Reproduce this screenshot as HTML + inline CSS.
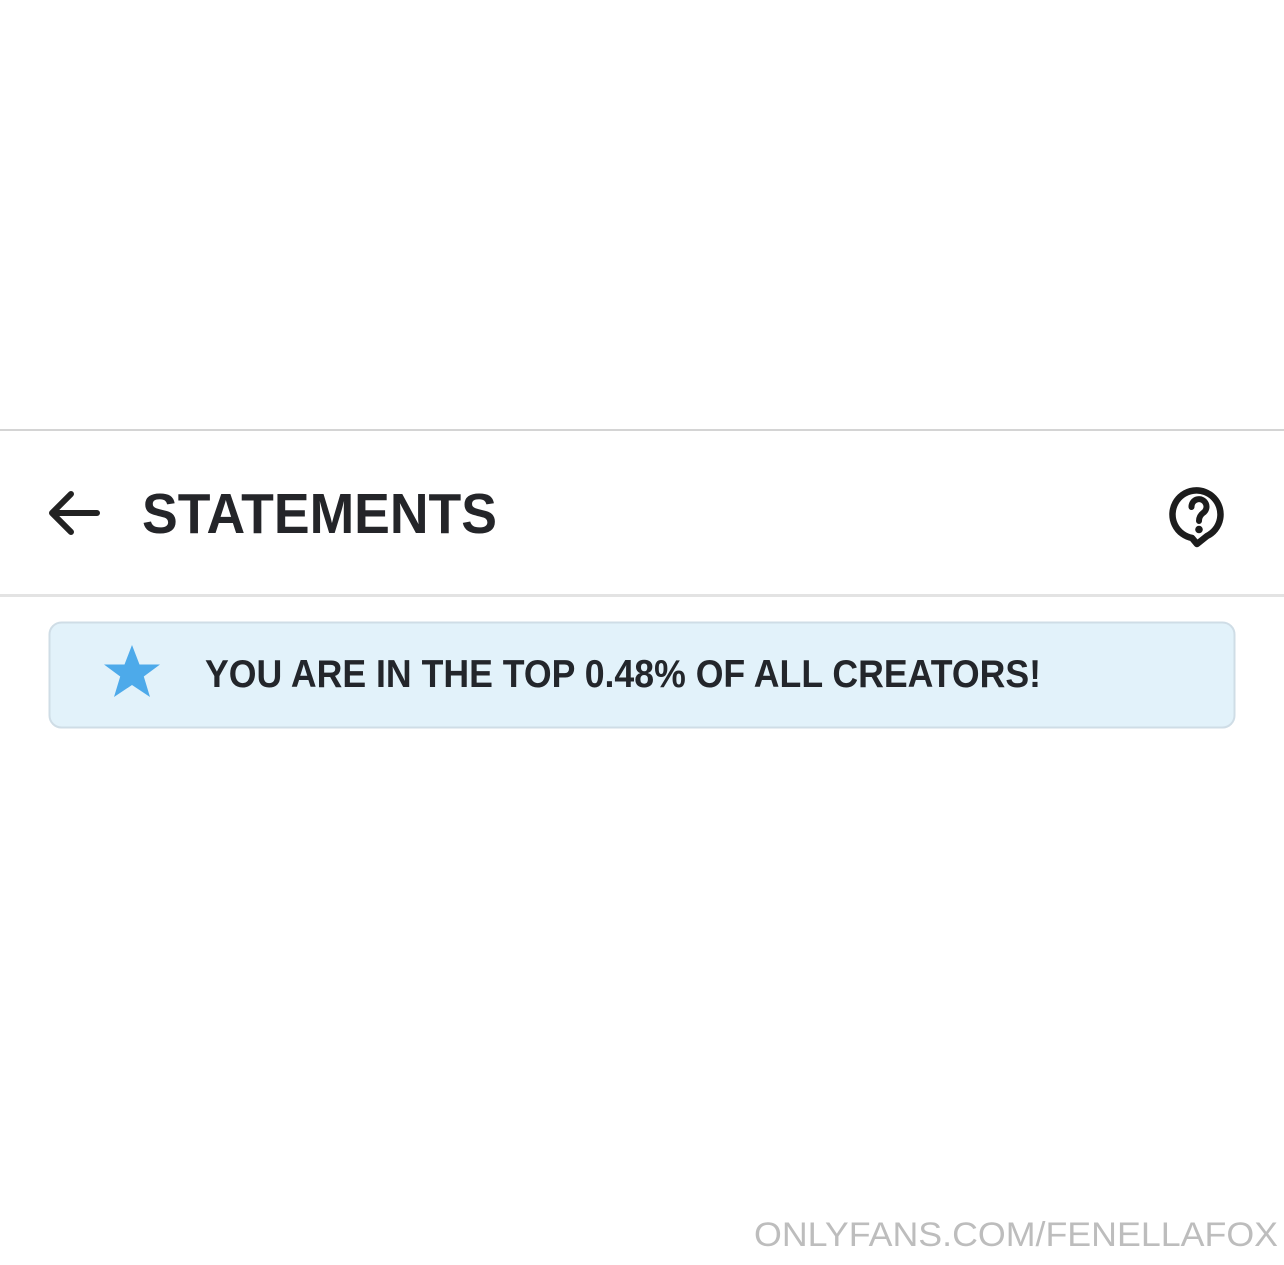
<!DOCTYPE html>
<html><head><meta charset="utf-8"><style>
html,body{margin:0;padding:0;background:#fff;width:1284px;height:1265px;overflow:hidden}
</style></head><body>
<svg width="1284" height="1265" viewBox="0 0 1284 1265" xmlns="http://www.w3.org/2000/svg" style="display:block">
<rect width="1284" height="1265" fill="#fff"/>
<rect x="0" y="429" width="1284" height="2" fill="#d4d4d4"/>
<rect x="0" y="594" width="1284" height="3" fill="#e3e3e3"/>
<path d="M97 513 H53 M71 494 L52 513 L71 532" fill="none" stroke="#222" stroke-width="6" stroke-linecap="round" stroke-linejoin="round"/>
<text x="142" y="533" font-family="Liberation Sans, sans-serif" font-weight="bold" font-size="57" fill="#242529" textLength="355" lengthAdjust="spacingAndGlyphs">STATEMENTS</text>
<path d="M1192 538 A24 24 0 1 1 1207 536 L1197 544 Z" fill="none" stroke="#1c1c1c" stroke-width="6.5" stroke-linejoin="round"/>
<path d="M1191.5 507 A7.5 7.5 0 1 1 1203 513 Q1199 516 1199 521" fill="none" stroke="#1c1c1c" stroke-width="6" stroke-linecap="round"/>
<circle cx="1199" cy="529.5" r="3.8" fill="#1c1c1c"/>
<rect x="49.5" y="622.5" width="1185" height="105" rx="12" fill="#e2f2fa" stroke="#cfdde6" stroke-width="2"/>
<polygon points="132,645 139.5,664.5 160,664.5 143.8,676.5 150,697 132,685 114,697 120.2,676.5 104,664.5 124.5,664.5" fill="#4daaea"/>
<text x="205" y="687" font-family="Liberation Sans, sans-serif" font-weight="bold" font-size="39" fill="#23262b" textLength="836" lengthAdjust="spacingAndGlyphs">YOU ARE IN THE TOP 0.48% OF ALL CREATORS!</text>
<text x="754" y="1246" font-family="Liberation Sans, sans-serif" font-size="34" fill="#bdbdbd" textLength="524" lengthAdjust="spacingAndGlyphs">ONLYFANS.COM/FENELLAFOX</text>
</svg>
</body></html>
